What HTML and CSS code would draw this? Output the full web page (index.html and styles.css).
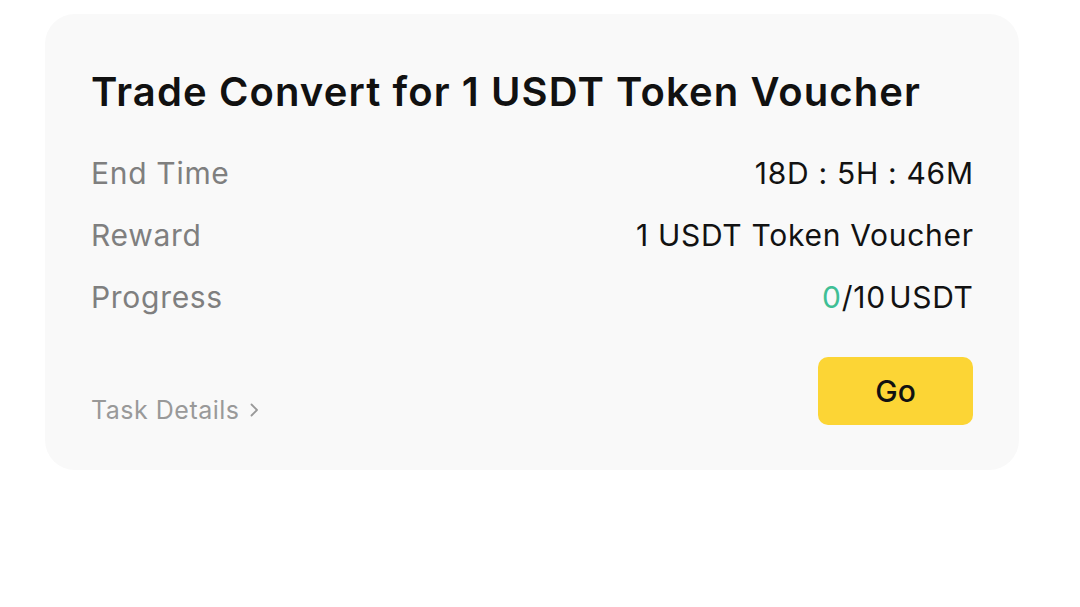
FILE: index.html
```html
<!DOCTYPE html>
<html>
<head>
<meta charset="utf-8">
<link rel="stylesheet" href="styles.css">
</head>
<body>
<div class="card">
  <h1 class="title">Trade Convert for 1 USDT Token Voucher</h1>
  <div class="rows">
    <div class="row"><span class="label">End Time</span><span class="value">18D : 5H : 46M</span></div>
    <div class="row"><span class="label">Reward</span><span class="value">1 USDT Token Voucher</span></div>
    <div class="row"><span class="label">Progress</span><span class="value"><span class="green">0</span>/10&#8202;USDT</span></div>
  </div>
  <div class="footer">
    <a class="details">Task Details
      <svg class="chev" width="10" height="16" viewBox="0 0 10 16"><path d="M2.5 2.5 L8 8 L2.5 13.5" fill="none" stroke="#999" stroke-width="1.8" stroke-linecap="round" stroke-linejoin="round"/></svg>
    </a>
    <button class="go">Go</button>
  </div>
</div>
</body>
</html>
```
FILE: styles.css
```css
* { box-sizing: border-box; }
html, body { margin: 0; padding: 0; background: #fff; }
body { font-family: Inter, "Noto Sans", sans-serif; }
.card {
  margin: 14px 0 0 45px;
  width: 974px;
  height: 456px;
  background: #f9f9f9;
  border-radius: 30px;
  padding: 52px 46px 0 46px;
}
.title {
  margin: 0;
  font-size: 40px;
  font-weight: 600;
  color: #111;
  line-height: 52px;
  letter-spacing: 1.1px;
}
.rows { margin-top: 24px; display: flex; flex-direction: column; }
.row {
  display: flex;
  justify-content: space-between;
  align-items: baseline;
  height: 62px;
  line-height: 62px;
  font-size: 30px;
  letter-spacing: 0.7px;
}
.label { color: #7f7f7f; }
.value { color: #121212; margin-right: -0.7px; }
.green { color: #3fbf95; }
.footer {
  display: flex;
  justify-content: space-between;
  align-items: flex-end;
  margin-top: 29px;
}
.details {
  font-size: 25px;
  color: #999;
  display: flex;
  align-items: center;
  gap: 9px;
  padding-bottom: 0;
  letter-spacing: 0.5px;
}
.go {
  width: 155px;
  height: 68px;
  border: none;
  border-radius: 10px;
  background: #fcd535;
  font-family: Inter, "Noto Sans", sans-serif;
  font-size: 30px;
  font-weight: 500;
  color: #111;
}
```
